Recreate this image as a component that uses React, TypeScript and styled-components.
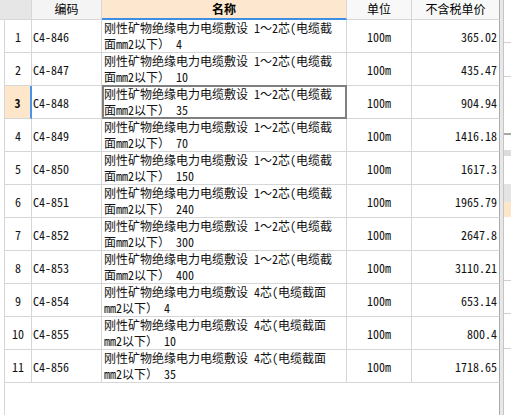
import React from "react";
import styled, { createGlobalStyle, css } from "styled-components";

const GlobalStyle = createGlobalStyle`
  html, body {
    margin: 0;
    padding: 0;
    background: #ffffff;
    overflow: hidden;
  }
  #root {
    width: 511px;
    height: 415px;
  }
`;

const MONO = `"Noto Sans Mono CJK SC", "Noto Sans CJK SC", "Liberation Mono", monospace`;
const SANS = `"Noto Sans CJK SC", "Noto Sans", sans-serif`;
const COLS = "32px 70px 245px 65px 88px";
const LINE = "#d6d6d6";

const Page = styled.div`
  display: flex;
  width: 511px;
  height: 415px;
  background: #fff;
`;

const Table = styled.div`
  width: 500px;
  height: 415px;
  display: flex;
  flex-direction: column;
  font-family: ${MONO};
  font-size: 12px;
  color: #111;
`;

const HeaderRow = styled.div`
  display: grid;
  grid-template-columns: ${COLS};
  height: 20px;
  flex: none;
`;

const HeadCell = styled.div<{ $bg: string; $bold?: boolean; $accent?: boolean; $last?: boolean }>`
  box-sizing: border-box;
  background: ${(p) => p.$bg};
  border-right: 1px solid ${(p) => (p.$last ? "#aaaaaa" : LINE)};
  border-bottom: ${(p) => (p.$accent ? "2px solid #3f8ee6" : `1px solid ${LINE}`)};
  font-family: ${SANS};
  font-size: 12px;
  font-weight: ${(p) => (p.$bold ? 700 : 400)};
  line-height: 18px;
  text-align: center;
  color: #000;
  white-space: nowrap;
  overflow: hidden;
`;

const Row = styled.div`
  display: grid;
  grid-template-columns: ${COLS};
  height: 33px;
  flex: none;
`;

const baseCell = css`
  box-sizing: border-box;
  border-right: 1px solid ${LINE};
  border-bottom: 1px solid ${LINE};
  white-space: nowrap;
  overflow: visible;
`;

const NumCell = styled.div<{ $sel?: boolean }>`
  ${baseCell};
  margin-left: 4px;
  border-left: 1px solid ${LINE};
  background: ${(p) => (p.$sel ? "#fde6c9" : "#ffffff")};
  border-right: ${(p) => (p.$sel ? "2px solid #4a93e6" : `1px solid ${LINE}`)};
  font-weight: ${(p) => (p.$sel ? 700 : 400)};
  display: flex;
  align-items: center;
  justify-content: center;
`;

const CodeCell = styled.div`
  ${baseCell};
  display: flex;
  align-items: center;
  padding-left: 1px;
`;

const NameCell = styled.div<{ $sel?: boolean }>`
  ${baseCell};
  position: relative;
  padding-left: 2px;
  line-height: 16px;
  ${(p) =>
    p.$sel &&
    css`
      &::after {
        content: "";
        position: absolute;
        left: 0;
        top: -1px;
        right: -1px;
        bottom: -1px;
        border: 2px solid #7f7f7f;
        z-index: 2;
        pointer-events: none;
      }
    `}
`;

const NameLine = styled.div`
  height: 16px;
`;

const UnitCell = styled.div`
  ${baseCell};
  display: flex;
  align-items: center;
  justify-content: center;
`;

const PriceCell = styled.div`
  ${baseCell};
  border-right-color: #aaaaaa;
  display: flex;
  align-items: center;
  justify-content: flex-end;
  padding-right: 2px;
`;

const Filler = styled.div`
  flex: 1;
  margin-left: 4px;
  border-left: 1px solid ${LINE};
  border-right: 1px solid #aaaaaa;
`;

const Side = styled.div`
  display: flex;
  width: 11px;
  height: 415px;
`;

const Gutter = styled.div`
  width: 3px;
  background: #e8e8e8;
  border-right: 1px solid #c4c4c4;
`;

const Strip = styled.div`
  flex: 1;
  display: flex;
  flex-direction: column;
`;

const Seg = styled.div<{ $h: number; $bg: string }>`
  height: ${(p) => p.$h}px;
  background: ${(p) => p.$bg};
  flex: none;
`;

type Item = { code: string; line2: string; price: string; four?: boolean };

const items: Item[] = [
  { code: "C4-846", line2: "4", price: "365.02" },
  { code: "C4-847", line2: "10", price: "435.47" },
  { code: "C4-848", line2: "35", price: "904.94" },
  { code: "C4-849", line2: "70", price: "1416.18" },
  { code: "C4-850", line2: "150", price: "1617.3" },
  { code: "C4-851", line2: "240", price: "1965.79" },
  { code: "C4-852", line2: "300", price: "2647.8" },
  { code: "C4-853", line2: "400", price: "3110.21" },
  { code: "C4-854", line2: "4", price: "653.14", four: true },
  { code: "C4-855", line2: "10", price: "800.4", four: true },
  { code: "C4-856", line2: "35", price: "1718.65", four: true },
];

const segs: [number, string][] = [
  [42, "#fff"],
  [1, "#d0d0d0"],
  [33, "#fff"],
  [1, "#d0d0d0"],
  [56, "#fff"],
  [2, "#a8a8a8"],
  [15, "#fff"],
  [6, "#dcdcdc"],
  [28, "#fff"],
  [18, "#e4e4e4"],
  [15, "#fde6c9"],
  [63, "#fff"],
  [1, "#d0d0d0"],
  [32, "#fff"],
  [1, "#d0d0d0"],
  [34, "#fff"],
  [1, "#d0d0d0"],
  [67, "#fff"],
];

export default function App() {
  const selected = 2;
  return (
    <>
      <GlobalStyle />
      <Page>
        <Table>
          <HeaderRow>
            <HeadCell $bg="#e6e6e6" />
            <HeadCell $bg="#f4f4f4">编码</HeadCell>
            <HeadCell $bg="#fde8cf" $bold $accent>
              名称
            </HeadCell>
            <HeadCell $bg="#f8f8f8">单位</HeadCell>
            <HeadCell $bg="#f8f8f8" $last>
              不含税单价
            </HeadCell>
          </HeaderRow>
          {items.map((it, i) => {
            const sel = i === selected;
            const line1 = it.four
              ? "刚性矿物绝缘电力电缆敷设 4芯(电缆截面"
              : "刚性矿物绝缘电力电缆敷设 1～2芯(电缆截";
            const line2 = it.four ? `mm2以下） ${it.line2}` : `面mm2以下） ${it.line2}`;
            return (
              <Row key={it.code}>
                <NumCell $sel={sel}>{i + 1}</NumCell>
                <CodeCell>{it.code}</CodeCell>
                <NameCell $sel={sel}>
                  <NameLine>{line1}</NameLine>
                  <NameLine>{line2}</NameLine>
                </NameCell>
                <UnitCell>100m</UnitCell>
                <PriceCell>{it.price}</PriceCell>
              </Row>
            );
          })}
          <Filler />
        </Table>
        <Side>
          <Gutter />
          <Strip>
            {segs.map(([h, bg], k) => (
              <Seg key={k} $h={h} $bg={bg} />
            ))}
          </Strip>
        </Side>
      </Page>
    </>
  );
}
